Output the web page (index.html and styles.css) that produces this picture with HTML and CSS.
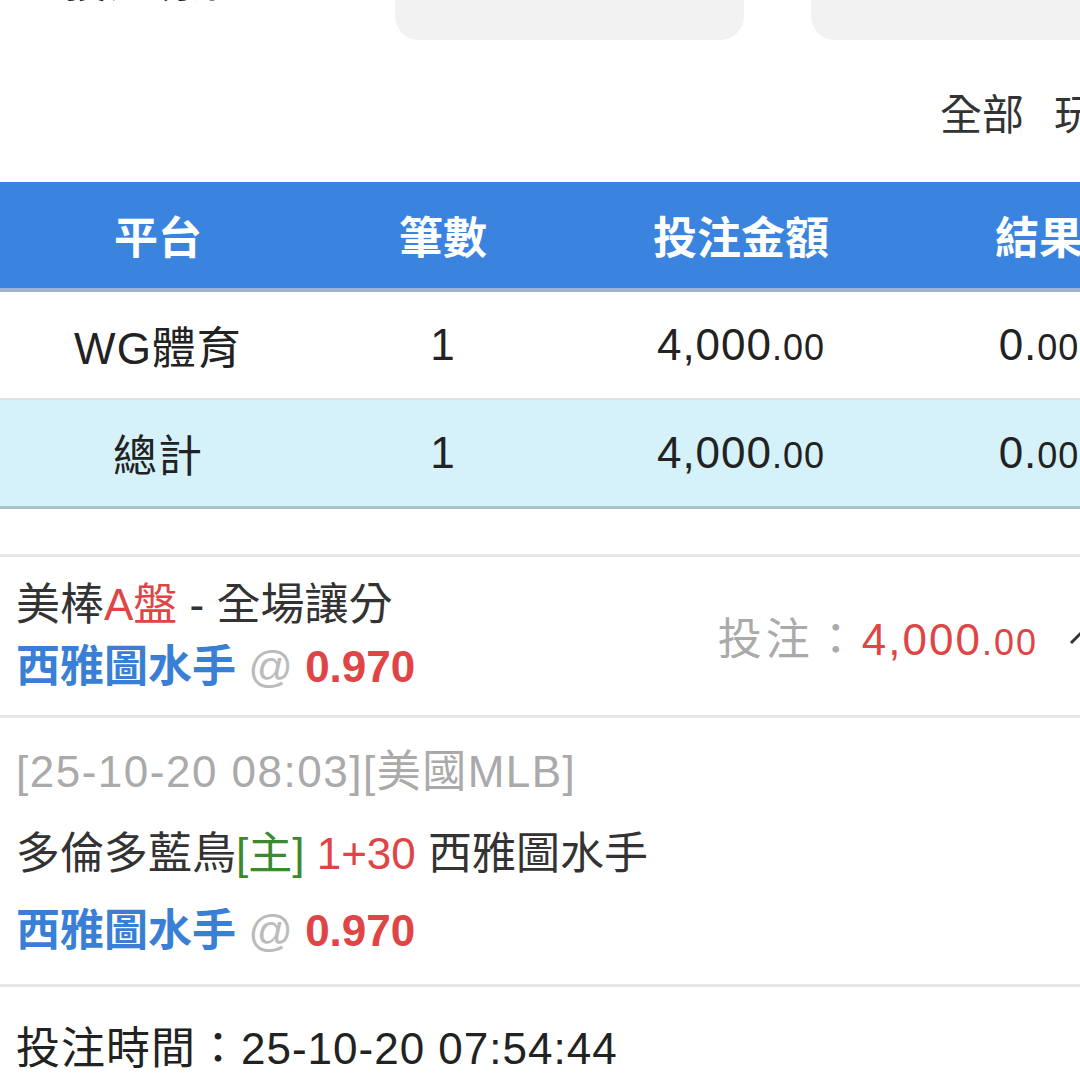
FILE: index.html
```html
<!DOCTYPE html>
<html lang="zh-TW">
<head>
    <meta charset="UTF-8">
    <meta name="viewport" content="width=device-width, initial-scale=1.0">
    <title>投注記錄</title>
    <link rel="stylesheet" href="styles.css">
</head>
<body>
    <div class="page">
        <div class="tabs">
            <div class="tab-title">投注明細</div>
            <div class="tab-btn">按日查詢</div>
            <div class="tab-btn">最近七日</div>
        </div>

        <div class="filter">
            <span>全部</span>
            <span>玩法</span>
        </div>

        <div class="summary">
            <div class="row head">
                <div>平台</div>
                <div>筆數</div>
                <div>投注金額</div>
                <div>結果</div>
            </div>
            <div class="row">
                <div>WG體育</div>
                <div>1</div>
                <div>4,000<small>.00</small></div>
                <div>0.<small>00</small></div>
            </div>
            <div class="row total">
                <div>總計</div>
                <div>1</div>
                <div>4,000<small>.00</small></div>
                <div>0.<small>00</small></div>
            </div>
        </div>

        <div class="bet">
            <div class="bet-top">
                <div class="bet-info">
                    <div class="line">美棒<span class="red">A盤</span> - 全場讓分</div>
                    <div class="pick"><span class="team">西雅圖水手</span> <span class="at">@</span> <b class="odds">0.970</b></div>
                </div>
                <div class="stake">
                    <span class="label">投注：</span><span class="red">4,000<small>.00</small></span>
                </div>
                <svg class="chevron" width="30" height="20" viewBox="0 0 30 20">
                    <path d="M3 17 L15 5 L27 17" fill="none" stroke="#333" stroke-width="3"/>
                </svg>
            </div>
            <div class="bet-detail">
                <div class="meta">[25-10-20 08:03][美國MLB]</div>
                <div class="line">多倫多藍鳥<span class="green">[主]</span> <span class="red">1+30</span> 西雅圖水手</div>
                <div class="pick"><span class="team">西雅圖水手</span> <span class="at">@</span> <b class="odds">0.970</b></div>
            </div>
            <div class="bet-time">投注時間：25-10-20 07:54:44</div>
        </div>
    </div>
</body>
</html>
```

FILE: styles.css
```css
body {
    margin: 0;
    background: #fff;
    font-family: "Liberation Sans", "Noto Sans CJK TC", sans-serif;
    color: #222;
    overflow: hidden;
}
.page {
    width: 1080px;
    overflow: hidden;
}
.tabs {
    display: flex;
    align-items: flex-end;
    height: 40px;
}
.tab-title {
    width: 330px;
    padding-left: 65px;
    font-size: 42px;
    font-weight: bold;
    line-height: 42px;
    margin-bottom: 36px;
    color: #222;
    flex-shrink: 0;
}
.tab-btn {
    width: 349px;
    height: 100px;
    margin-right: 67px;
    background: #f2f2f2;
    border-radius: 24px;
    flex-shrink: 0;
    font-size: 42px;
    color: #999;
    text-align: center;
    line-height: 40px;
}
.filter {
    display: flex;
    gap: 30px;
    padding-left: 940px;
    height: 142px;
    align-items: center;
    font-size: 42px;
    color: #333;
    white-space: nowrap;
}
.summary {
    width: 1166px;
}
.row {
    display: grid;
    grid-template-columns: 316px 254px 342px 254px;
    height: 106px;
    align-items: center;
    font-size: 44px;
    text-align: center;
    border-bottom: 2px solid #e2e2e2;
    white-space: nowrap;
    letter-spacing: 1px;
}
.row small {
    font-size: 36px;
}
.row.head {
    background: #3a84e0;
    color: #fff;
    font-weight: bold;
    border-bottom: 4px solid #9eb2d4;
    letter-spacing: 0;
}
.row.total {
    background: #d5f1fa;
    border-bottom: 3px solid #a9c1c9;
}
.bet {
    margin-top: 45px;
    border-top: 3px solid #e6e6e6;
}
.bet-top {
    display: flex;
    align-items: center;
    height: 158px;
    padding-left: 16px;
    border-bottom: 3px solid #e6e6e6;
}
.bet-info {
    flex: 1;
}
.line {
    font-size: 44px;
    color: #333;
    line-height: 62px;
    white-space: nowrap;
}
.pick {
    font-size: 44px;
    line-height: 62px;
    white-space: nowrap;
}
.team {
    color: #3a7fd6;
    font-weight: bold;
}
.at {
    color: #bbb;
}
.odds {
    color: #e04545;
}
.red {
    color: #e04545;
}
.green {
    color: #3a8a2e;
}
.stake {
    font-size: 44px;
    white-space: nowrap;
    margin-right: 30px;
}
.stake .label {
    color: #aaa;
    letter-spacing: 4px;
}
.stake .red {
    letter-spacing: 2px;
}
.stake small {
    font-size: 36px;
}
.chevron {
    margin-right: -18px;
    flex-shrink: 0;
}
.bet-detail {
    padding: 28px 16px 14px;
    border-bottom: 3px solid #e6e6e6;
}
.bet-detail .meta {
    font-size: 44px;
    color: #aaa;
    line-height: 52px;
    margin-bottom: 18px;
    letter-spacing: 1.5px;
}
.bet-detail .line {
    line-height: 76px;
}
.bet-detail .pick {
    line-height: 78px;
}
.bet-time {
    padding: 26px 16px;
    font-size: 44px;
    color: #222;
    letter-spacing: 1px;
}
```
